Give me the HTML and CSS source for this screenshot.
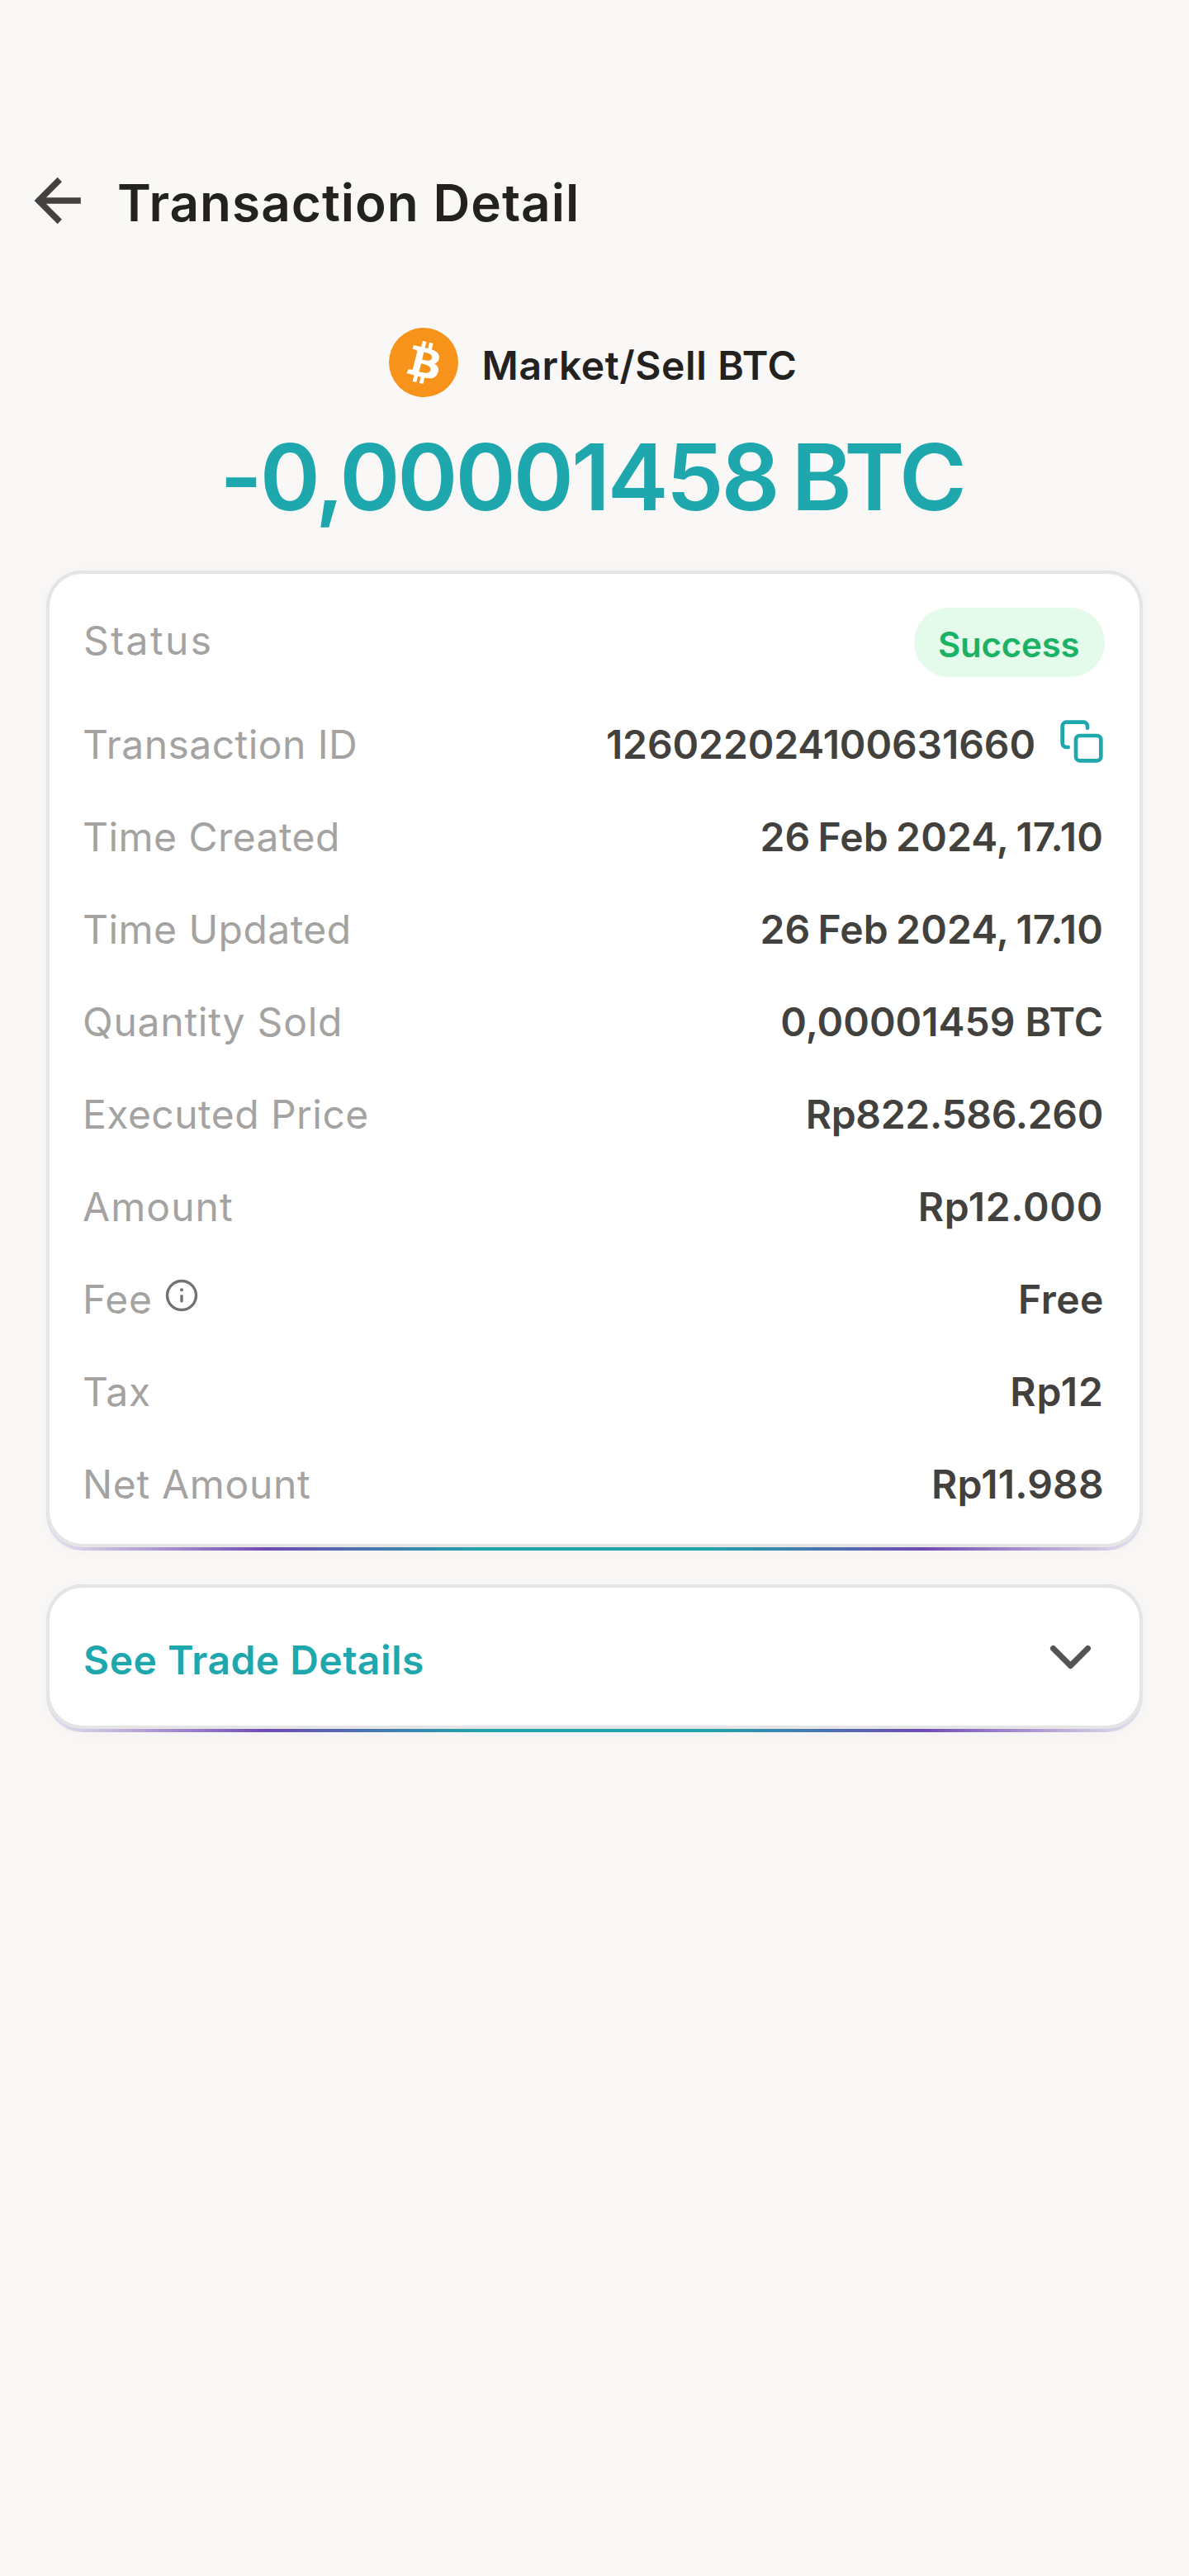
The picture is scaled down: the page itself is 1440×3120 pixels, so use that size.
FILE: index.html
```html
<!DOCTYPE html>
<html lang="en">
<head>
<meta charset="utf-8">
<title>Transaction Detail</title>
<link rel="stylesheet" href="styles.css">
</head>
<body>
<header class="header">
  <svg class="back" viewBox="0 0 60 60" fill="none" stroke="currentColor" stroke-width="7.5"><path d="M32.3 4.5 6.8 30 32.3 55.5M8 30H57.8"/></svg>
  <h1 class="title">Transaction Detail</h1>
</header>
<main>
  <section class="summary">
    <div class="pair">
      <svg class="coin" viewBox="0 0 32 32"><circle cx="16" cy="16" r="16" fill="#f7931a"/><path fill="#fff" d="M23.189 14.02c.314-2.096-1.283-3.223-3.465-3.975l.708-2.84-1.728-.43-.69 2.765c-.454-.114-.92-.22-1.385-.326l.695-2.783L15.596 6l-.708 2.839c-.376-.086-.746-.17-1.104-.26l.002-.009-2.384-.595-.46 1.846s1.283.294 1.256.312c.7.175.826.638.805 1.006l-.806 3.235c.048.012.11.03.18.057l-.183-.045-1.13 4.532c-.086.212-.303.531-.793.41.018.025-1.256-.313-1.256-.313l-.858 1.978 2.25.561c.418.105.828.215 1.231.318l-.715 2.872 1.727.43.708-2.84c.472.127.93.245 1.378.357l-.706 2.828 1.728.43.715-2.866c2.948.558 5.164.333 6.097-2.333.752-2.146-.037-3.385-1.588-4.192 1.13-.26 1.98-1.003 2.207-2.538zm-3.95 5.538c-.533 2.147-4.148.986-5.32.695l.95-3.805c1.172.293 4.929.872 4.37 3.11zm.535-5.569c-.487 1.953-3.495.96-4.47.717l.86-3.45c.975.243 4.118.696 3.61 2.733z"/></svg>
      <span class="pair-name">Market/Sell BTC</span>
    </div>
    <div class="amount">-0,00001458 BTC</div>
  </section>

  <section class="card-edge">
    <dl class="card details">
      <div class="row status"><dt>Status</dt><dd class="pill">Success</dd></div>
      <div class="row txid"><dt>Transaction ID</dt><dd>126022024100631660</dd>
        <svg class="copy" viewBox="0 0 24 24" fill="none" stroke="currentColor" stroke-width="2" stroke-linecap="round" stroke-linejoin="round"><rect x="9" y="9" width="13" height="13" rx="2"/><path d="M5 15H4a2 2 0 0 1-2-2V4a2 2 0 0 1 2-2h9a2 2 0 0 1 2 2v1"/></svg>
      </div>
      <div class="row date"><dt>Time Created</dt><dd>26 Feb 2024, 17.10</dd></div>
      <div class="row date"><dt>Time Updated</dt><dd>26 Feb 2024, 17.10</dd></div>
      <div class="row quantity"><dt>Quantity Sold</dt><dd>0,00001459 BTC</dd></div>
      <div class="row price"><dt>Executed Price</dt><dd>Rp822.586.260</dd></div>
      <div class="row gross"><dt>Amount</dt><dd>Rp12.000</dd></div>
      <div class="row fee"><dt>Fee</dt>
        <svg class="info" viewBox="0 0 40 40" fill="none" stroke="currentColor" stroke-width="3.4" stroke-linecap="round"><circle cx="20" cy="20" r="17.5"/><path d="M20 20.6v6.3"/><circle cx="20" cy="13.2" r="2" fill="currentColor" stroke="none"/></svg>
        <dd>Free</dd></div>
      <div class="row tax"><dt>Tax</dt><dd>Rp12</dd></div>
      <div class="row net"><dt>Net Amount</dt><dd>Rp11.988</dd></div>
    </dl>
  </section>

  <section class="card-edge">
    <div class="card trade">
      <span class="trade-label">See Trade Details</span>
      <svg class="chevron" viewBox="0 0 84 56" fill="none" stroke="currentColor" stroke-width="7" stroke-linecap="round" stroke-linejoin="round"><path d="M21.5 17.5 42.5 38.5 63.5 17.5"/></svg>
    </div>
  </section>
</main>
</body>
</html>
```
FILE: styles.css
```css
* { box-sizing: border-box; }

body {
  margin: 0;
  min-height: 3120px;
  background: #f9f8f7;
  font-family: Inter, "Liberation Sans", sans-serif;
  font-size: 48px;
  line-height: 63px;
  color: #23221f;
  white-space: nowrap;
}

svg { display: block; flex: none; }

.header {
  display: flex;
  align-items: center;
  gap: 42px;
  padding: 208px 40px 0;
}
.back { width: 60px; height: 60px; margin-bottom: 5px; color: #434240; }
.title {
  margin: 0;
  font-size: 62px;
  line-height: 75px;
  font-weight: 600;
  letter-spacing: 1.02px;
}

.summary { padding: 114px 0 46px; }
.pair {
  display: flex;
  justify-content: center;
  align-items: center;
  gap: 28px;
  padding-right: 3px;
}
.coin { width: 84px; height: 84px; }
.pair-name { margin-top: 7px; font-weight: 600; letter-spacing: 0.62px; }
.amount {
  margin-top: 29px;
  padding-right: 6px;
  text-align: center;
  font-size: 111px;
  line-height: 135px;
  font-weight: 600;
  letter-spacing: -3.03px;
  word-spacing: -8px;
  color: #1ea7ad;
}

/* The coloured strip under each card is the wrapper showing below it. */
.card-edge {
  margin: 0 56px 41px;
  padding-bottom: 4px;
  border-radius: 44px;
  background: linear-gradient(90deg, #e4dfee 0%, #d6cee6 3%, #704ab2 20%, #1ea5aa 40%, #1ea5aa 60%, #704ab2 80%, #d6cee6 97%, #e4dfee 100%);
  box-shadow: 0 2px 20px rgba(60, 50, 40, 0.035);
}
.card {
  margin: 0;
  border: 4px solid #e5e5e5;
  border-radius: 44px;
  background: #fff;
}

.details {
  display: flex;
  flex-direction: column;
  gap: 49px;
  padding: 41px 42px 41px 40px;
}
.row { display: flex; height: 63px; align-items: flex-start; }
.row dt { color: #a4a3a1; letter-spacing: 0.45px; }
.row dd {
  margin: 0 0 0 auto;
  padding-right: 2px;
  font-weight: 600;
  color: #42413e;
}

.status { height: 84px; margin-bottom: 1px; }
.status dt { margin: 8px 0 0 1px; letter-spacing: 2.4px; }
.row .pill {
  width: 231px;
  height: 84px;
  padding: 19px 0 0 29px;
  border-radius: 42px;
  background: #e4faeb;
  color: #1bb266;
  font-size: 42px;
  line-height: 51px;
  letter-spacing: -0.23px;
}
.txid dd { padding: 0; letter-spacing: -0.1px; }
.copy { width: 56px; height: 56px; margin-left: 28px; color: #1ea7ad; }
.date dd { letter-spacing: 0.13px; word-spacing: -3px; }
.quantity dt { letter-spacing: 0.75px; }
.price dd { letter-spacing: -0.31px; }
.gross dt { letter-spacing: 1.06px; }
.gross dd { letter-spacing: 0.69px; }
.fee dt { letter-spacing: 0.79px; }
.fee dd { letter-spacing: 0.5px; padding-right: 1px; }
.info { width: 40px; height: 40px; margin: 7px 0 0 15px; color: #73726f; }
.tax dt { letter-spacing: 0.79px; }
.tax dd { letter-spacing: 1px; padding-right: 1px; }
.net dt { letter-spacing: 0.66px; }
.net dd { letter-spacing: 0.22px; padding-right: 1px; }

.trade {
  display: flex;
  justify-content: space-between;
  align-items: flex-start;
  height: 175px;
  padding: 56px 42px 0 41px;
}
.trade-label { font-weight: 600; letter-spacing: 0.46px; color: #1ea7ad; }
.chevron { width: 84px; height: 56px; color: #555452; }
```
